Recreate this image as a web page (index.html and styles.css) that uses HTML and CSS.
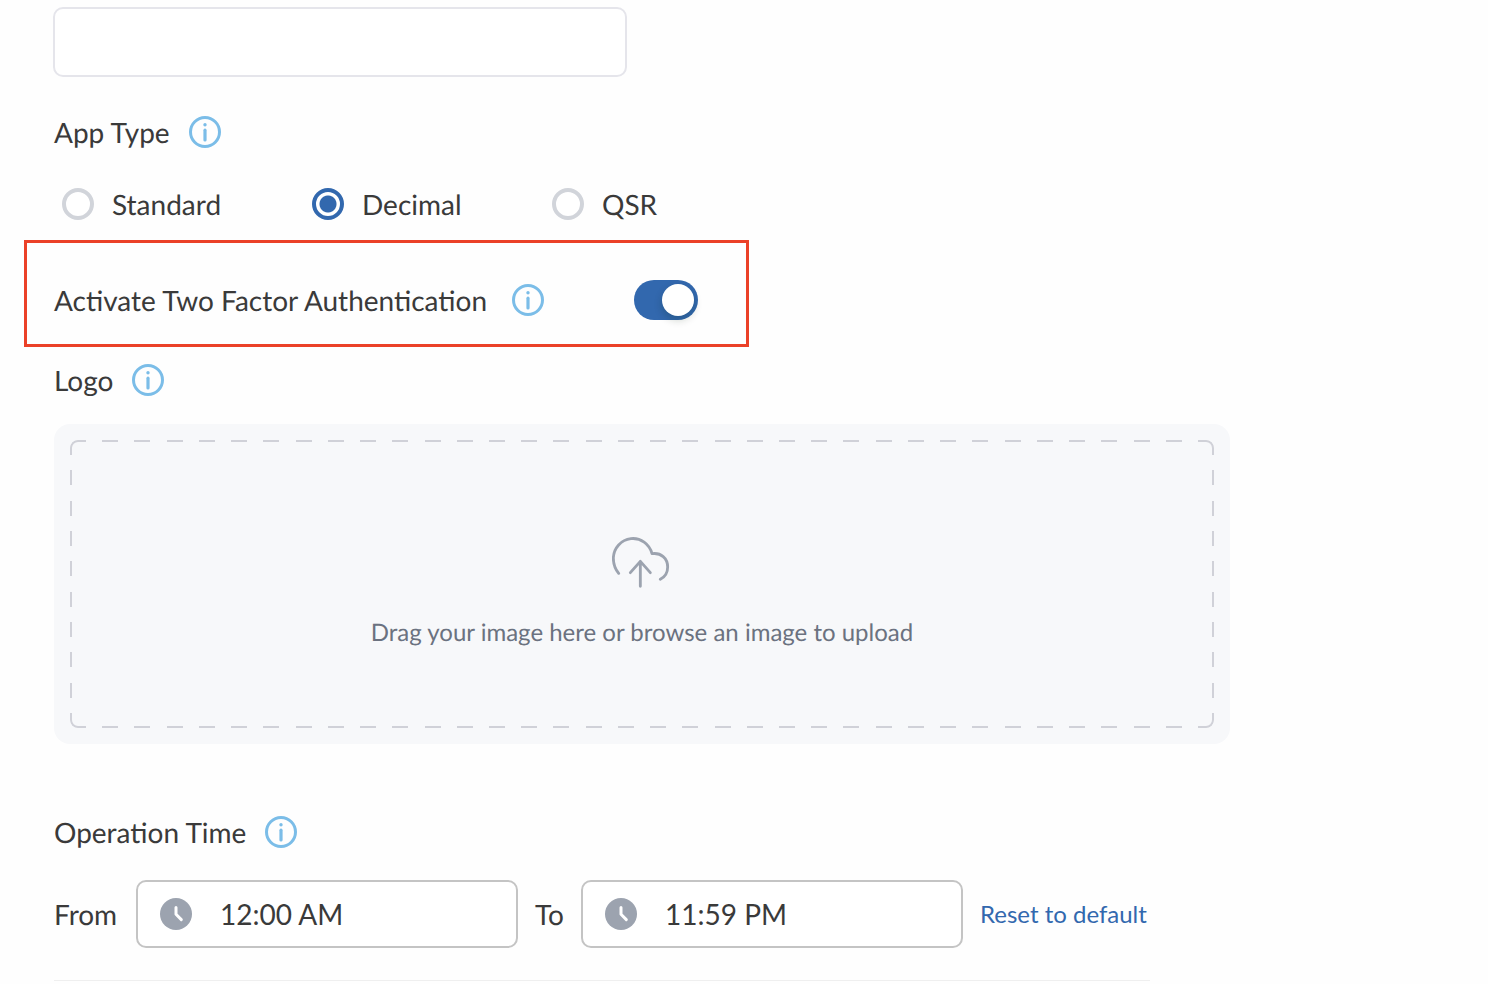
FILE: index.html
```html
<!DOCTYPE html>
<html lang="en">
<head>
<meta charset="utf-8">
<meta name="viewport" content="width=device-width, initial-scale=1">
<title>App settings</title>
<link rel="stylesheet" href="styles.css">
</head>
<body>
<svg class="sprite" aria-hidden="true">
  <symbol id="info" viewBox="0 0 32 32">
    <circle cx="16" cy="16" r="14.5" fill="none" stroke="currentColor" stroke-width="3"/>
    <circle cx="16" cy="8.7" r="1.7" fill="currentColor"/>
    <path d="M16 14.2V24" fill="none" stroke="currentColor" stroke-width="3.2" stroke-linecap="round"/>
  </symbol>
  <symbol id="clock" viewBox="0 0 32 32">
    <circle cx="16" cy="16" r="16" fill="#9ca3af"/>
    <path d="M16 9.5V16.3L21.3 21.6" fill="none" stroke="#fff" stroke-width="3" stroke-linecap="round" stroke-linejoin="round"/>
  </symbol>
</svg>
<form class="settings">
  <input class="text-field" type="text" aria-label="Name">

  <fieldset class="group">
    <legend class="heading">App Type <svg class="icon info"><use href="#info"/></svg></legend>
    <div class="options">
      <label class="option"><input class="radio" type="radio" name="type">Standard</label>
      <label class="option"><input class="radio" type="radio" name="type" checked>Decimal</label>
      <label class="option"><input class="radio" type="radio" name="type">QSR</label>
    </div>
  </fieldset>

  <div class="highlight">
    <label class="heading" for="two-factor">Activate Two Factor Authentication <svg class="icon info"><use href="#info"/></svg></label>
    <input class="switch" type="checkbox" role="switch" id="two-factor" checked>
  </div>

  <label class="heading" for="logo">Logo <svg class="icon info"><use href="#info"/></svg></label>
  <label class="dropzone">
    <input class="file" type="file" id="logo">
    <span class="dropzone-body">
      <svg class="cloud" viewBox="96 45 180 165" fill="none" stroke="currentColor" stroke-width="8.5" stroke-linecap="round" stroke-linejoin="round" aria-hidden="true">
        <path d="M116 163C106 151 100 136 100 117A59 61 0 0 1 216 104C243 100 263 118 263 144C263 160 254 174 241 181"/>
        <path d="M181 202V127M151 161L181 127L211 161"/>
      </svg>
      <span>Drag your image here or browse an image to upload</span>
    </span>
  </label>

  <div class="heading" id="time-title">Operation Time <svg class="icon info"><use href="#info"/></svg></div>
  <div class="times" role="group" aria-labelledby="time-title">
    <label for="from">From</label>
    <span class="time"><svg class="icon"><use href="#clock"/></svg><input type="text" id="from" value="12:00 AM"></span>
    <label for="to">To</label>
    <span class="time"><svg class="icon"><use href="#clock"/></svg><input type="text" id="to" value="11:59 PM"></span>
    <button class="reset" type="button">Reset to default</button>
  </div>
</form>
</body>
</html>
```
FILE: styles.css
```css
* { box-sizing: border-box; }

body {
  margin: 0;
  background: #fefefe;
  color: #3a3a3a;
  font: 28px/32px Lato, sans-serif;
  text-rendering: geometricPrecision;
}

.sprite { position: absolute; width: 0; height: 0; }

.settings {
  max-width: 1284px;
  padding: 7px 54px 0;
}

.icon { flex: none; width: 32px; height: 32px; }
.info { color: #7bbde8; }

.text-field {
  display: block;
  width: 100%;
  max-width: 574px;
  height: 70px;
  margin-left: -1px;
  padding: 0 24px;
  border: 2px solid #e5e5eb;
  border-radius: 10px;
  background: #fff;
  font: inherit;
}

.heading {
  display: flex;
  align-items: center;
  gap: 19px;
  width: fit-content;
  padding: 0;
}

.group { margin: 39px 0 20px; padding: 0; border: 0; }

.options {
  display: grid;
  grid-template-columns: 250px 240px auto;
  margin-top: 40px;
  padding-left: 8px;
}

.option { display: flex; align-items: center; gap: 18px; }

.radio {
  appearance: none;
  width: 32px;
  height: 32px;
  margin: 0;
  border: 4px solid #d1d4da;
  border-radius: 50%;
  background: #fff;
}

.radio:checked {
  border-color: #3268ae;
  background: radial-gradient(circle, #3268ae 8px, #fff 9px);
}

.highlight {
  display: flex;
  align-items: center;
  justify-content: space-between;
  max-width: 725px;
  margin: 0 0 17px -30px;
  padding: 37px 48px 24px 27px;
  border: 3px solid #eb4128;
}

.highlight .heading { gap: 25px; }

.switch {
  appearance: none;
  flex: none;
  display: flex;
  justify-content: flex-end;
  width: 64px;
  height: 40px;
  margin: 0;
  padding: 4px;
  border-radius: 20px;
  background: #3268ae;
}

.switch::before {
  content: "";
  width: 32px;
  height: 32px;
  border-radius: 50%;
  background: #fff;
  box-shadow: 0 4px 8px rgb(0 35 11 / 20%);
}

.switch:not(:checked) { justify-content: flex-start; background: #d1d4da; }

.dropzone {
  position: relative;
  display: block;
  margin: 28px 0 72px;
  padding: 16px;
  border-radius: 16px;
  background: #f7f8fa;
  color: #6b7280;
  font-size: 24px;
}

.dropzone-body {
  display: flex;
  flex-direction: column;
  align-items: center;
  justify-content: center;
  gap: 28px;
  height: 288px;
  padding-top: 15px;
}

/* The outline is a solid rounded border cut into dashes by the mask. */
.dropzone-body::before {
  --across: repeating-linear-gradient(90deg, #000 0 16px, transparent 16px calc((100% - 16px) / 35));
  --down: repeating-linear-gradient(180deg, #000 0 15px, transparent 15px calc((100% - 15px) / 9));
  content: "";
  position: absolute;
  inset: 16px;
  border: 2px solid #d0d1d8;
  border-radius: 8px;
  mask: var(--across) top / 100% 8px no-repeat border-box,
        var(--across) bottom / 100% 8px no-repeat border-box,
        var(--down) left / 8px 100% no-repeat border-box,
        var(--down) right / 8px 100% no-repeat border-box;
}

.file { position: absolute; width: 1px; height: 1px; opacity: 0; }

.cloud { width: 60px; height: 55px; color: #9ca3af; }

.times {
  display: flex;
  align-items: center;
  gap: 17px;
  max-width: 1096px;
  margin-top: 32px;
  padding-bottom: 32px;
  border-bottom: 1px solid #efefef;
}

.times label:first-child { min-width: 65px; }

.time {
  display: flex;
  flex: 0 1 382px;
  align-items: center;
  gap: 28px;
  min-width: 0;
  height: 68px;
  padding: 0 22px;
  border: 2px solid #c4c4c4;
  border-radius: 10px;
  background: #fff;
}

.time input {
  flex: 1;
  min-width: 0;
  padding: 0;
  border: 0;
  background: none;
  color: inherit;
  font: inherit;
}

.reset {
  padding: 0;
  border: 0;
  background: none;
  color: #3268ae;
  font: 24px/32px Lato, sans-serif;
  white-space: nowrap;
}
```
